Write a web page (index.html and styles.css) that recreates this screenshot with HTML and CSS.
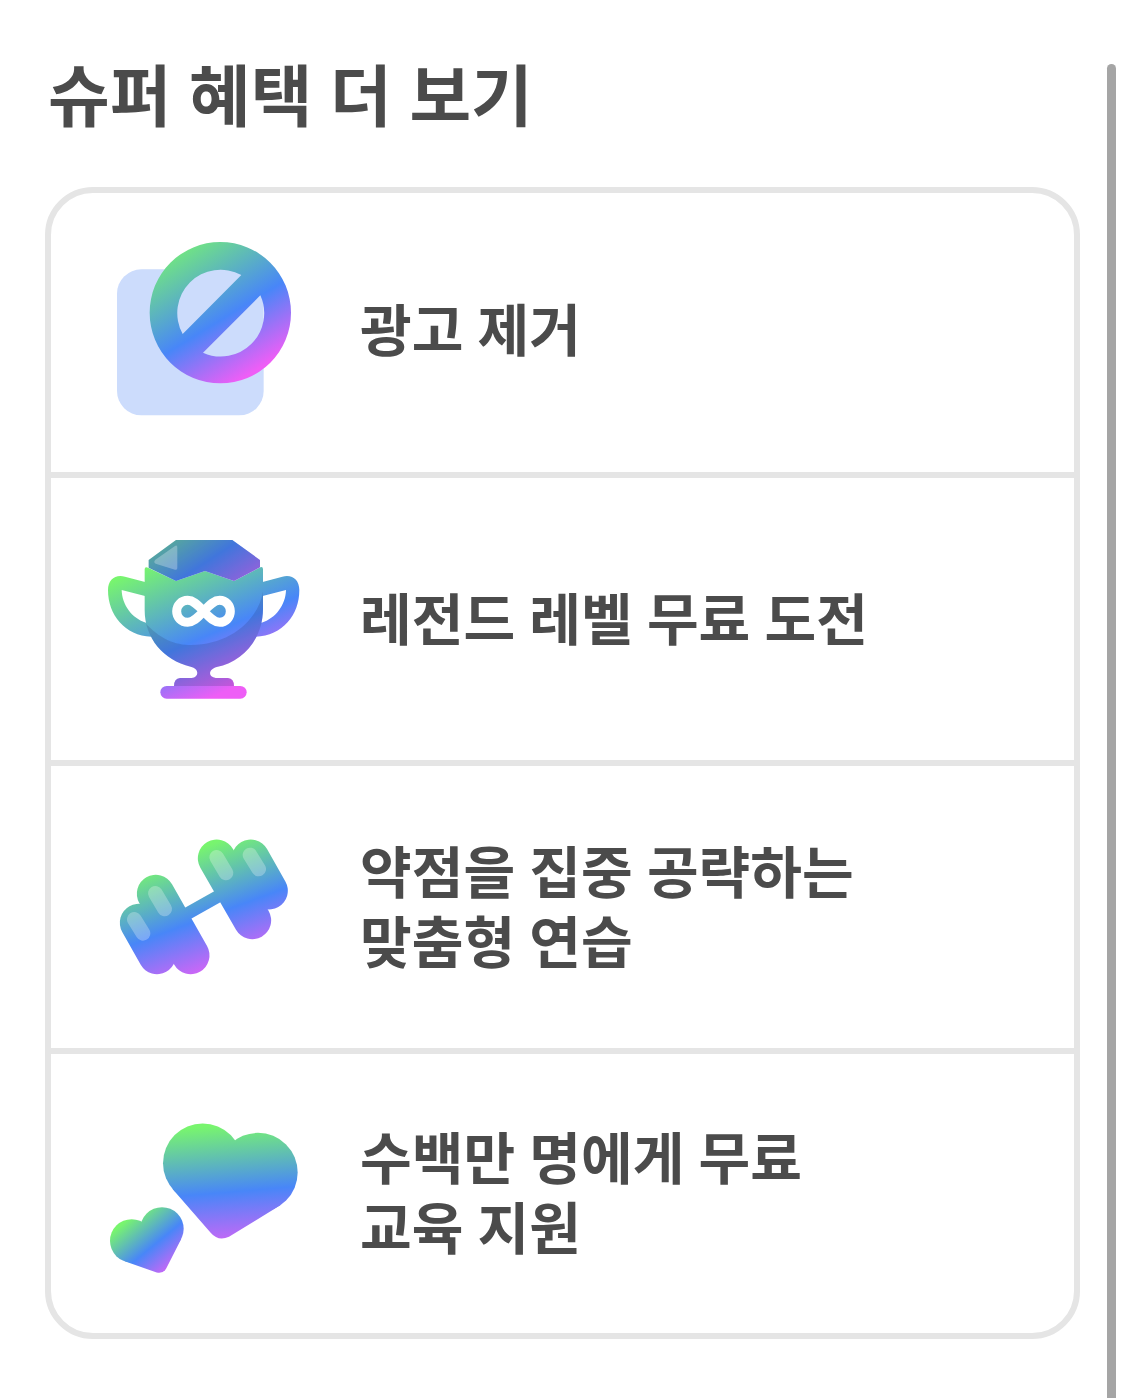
FILE: index.html
```html
<!DOCTYPE html>
<html lang="ko">
<head>
    <meta charset="UTF-8">
    <meta name="viewport" content="width=device-width, initial-scale=1.0">
    <title>슈퍼 혜택 더 보기</title>
    <link rel="stylesheet" href="styles.css">
</head>
<body>
    <h1>슈퍼 혜택 더 보기</h1>
    <ul class="benefits">
        <li class="benefit">
            <svg class="icon" viewBox="0 8 630 630">
                <defs>
                    <linearGradient id="banFill" gradientUnits="userSpaceOnUse" x1="217" y1="42" x2="476" y2="464">
                        <stop offset="0" stop-color="#78f56e"/>
                        <stop offset="0.57" stop-color="#4886f8"/>
                        <stop offset="0.94" stop-color="#ee5ef6"/>
                    </linearGradient>
                </defs>
                <rect x="51" y="132" width="440" height="438" rx="73" fill="#ccdcfc"/>
                <path fill="url(#banFill)" fill-rule="evenodd" d="M361 50A212 212 0 1 1 361 474A212 212 0 1 1 361 50ZM424 149A130 130 0 0 0 248 326ZM481 210L309 382A130 130 0 0 0 481 210Z"/>
            </svg>
            <p>광고 제거</p>
        </li>
        <li class="benefit">
            <svg class="icon" viewBox="0 -33 630 630">
                <defs>
                    <linearGradient id="cupFill" gradientUnits="userSpaceOnUse" x1="170" y1="110" x2="345" y2="513">
                        <stop offset="0" stop-color="#78f56e"/>
                        <stop offset="0.6" stop-color="#4886f8"/>
                        <stop offset="1" stop-color="#ee5ef6"/>
                    </linearGradient>
                    <linearGradient id="gemFill" gradientUnits="userSpaceOnUse" x1="190" y1="-50" x2="408" y2="280">
                        <stop offset="0" stop-color="#78f56e"/>
                        <stop offset="0.52" stop-color="#4886f8"/>
                        <stop offset="1" stop-color="#ee5ef6"/>
                    </linearGradient>
                    <path id="cup" d="M134 133Q134 124 144 128L228 168L315 138L402 168L478 128Q489 123 489 133V252C489 340 430 410 350 426C324 433 324 457 347 459H384Q402 461 402 483H222Q222 461 240 459H275C298 457 298 430 272 425C190 405 134 340 134 255Z"/>
                    <clipPath id="cupClip"><use href="#cup"/></clipPath>
                </defs>
                <g fill="url(#cupFill)">
                    <path fill-rule="evenodd" d="M138 172L75 155C45 147 24 165 24 195C24 270 75 332 154 335L145 290L138 293C96 280 66 240 65 195L138 214Z"/>
                    <path fill-rule="evenodd" d="M485 172L547 155C577 147 598 165 598 195C598 270 548 332 467 335L478 290L485 293C527 280 557 240 558 195L485 214Z"/>
                    <use href="#cup"/>
                    <rect x="181" y="483" width="259" height="38" rx="19"/>
                </g>
                <path fill="url(#gemFill)" d="M228 45H397L480 105V127L402 168L315 138L228 168L146 128V105Z"/>
                <path fill="#212b60" opacity="0.18" d="M228 45H397L480 105V127L402 168L315 138L228 168L146 128V105Z"/>
                <path fill="#212b60" opacity="0.18" clip-path="url(#cupClip)" d="M130 288C180 342 222 360 275 360C385 360 473 290 489 200V483H130Z"/>
                <path fill="#fff" opacity="0.28" d="M166 104L225 63Q232 59 232 68V129Q232 136 225 134L167 116Q159 111 166 104Z"/>
                <path fill="none" stroke="#fff" stroke-width="27" d="M311 259C290 236 278 226 263 226C244 226 230 241 230 259C230 277 244 292 263 292C278 292 290 282 311 259C332 236 344 226 359 226C378 226 391 241 391 259C391 277 378 292 359 292C344 292 332 282 311 259Z"/>
            </svg>
            <p>레전드 레벨 무료 도전</p>
        </li>
        <li class="benefit">
            <svg class="icon" viewBox="0 -69 630 630">
                <defs>
                    <linearGradient id="dumbbellFill" gradientUnits="userSpaceOnUse" x1="270" y1="80" x2="404" y2="444">
                        <stop offset="0" stop-color="#78f56e"/>
                        <stop offset="0.52" stop-color="#4886f8"/>
                        <stop offset="1" stop-color="#ee5ef6"/>
                    </linearGradient>
                </defs>
                <g stroke="url(#dumbbellFill)" stroke-width="113" stroke-linecap="round">
                    <path d="M350 100L457 286"/>
                    <path d="M452 100L507 197"/>
                    <path d="M167 206L272 391"/>
                    <path d="M116 293L171 391"/>
                    <path stroke-width="38" stroke-linecap="butt" d="M240 278L376 202"/>
                </g>
                <g stroke="#fff" stroke-width="44" stroke-linecap="round" opacity="0.27">
                    <path d="M350 97L378 144"/>
                    <path d="M450 90L476 132"/>
                    <path d="M166 205L194 252"/>
                    <path d="M103 283L129 325"/>
                </g>
            </svg>
            <p>약점을 집중 공략하는<br>맞춤형 연습</p>
        </li>
        <li class="benefit">
            <svg class="icon" viewBox="0 -64.5 630 630">
                <defs>
                    <linearGradient id="heartFill" gradientUnits="userSpaceOnUse" x1="348" y1="46" x2="381" y2="440">
                        <stop offset="0" stop-color="#78f56e"/>
                        <stop offset="0.51" stop-color="#4886f8"/>
                        <stop offset="1" stop-color="#ee5ef6"/>
                    </linearGradient>
                    <linearGradient id="smallHeartFill" gradientUnits="userSpaceOnUse" x1="66" y1="341" x2="205" y2="510">
                        <stop offset="0" stop-color="#78f56e"/>
                        <stop offset="0.5" stop-color="#4886f8"/>
                        <stop offset="1" stop-color="#ee5ef6"/>
                    </linearGradient>
                </defs>
                <g fill="url(#heartFill)">
                    <circle cx="308" cy="158" r="119"/>
                    <circle cx="474" cy="186" r="119"/>
                    <path d="M217 235L332 367Q355 394 387 379L541 284L403 110Z"/>
                </g>
                <g fill="url(#smallHeartFill)">
                    <circle cx="95" cy="391" r="65"/>
                    <circle cx="186" cy="355" r="65"/>
                    <path d="M74 452L170 486Q190 491 199 473L244 385L126 345Z"/>
                </g>
            </svg>
            <p>수백만 명에게 무료<br>교육 지원</p>
        </li>
    </ul>
    <div class="scrollbar"></div>
</body>
</html>
```

FILE: styles.css
```css
* {
    box-sizing: border-box;
}
body {
    height: 1398px;
    margin: 0;
    padding: 42px 45px 0;
    background-color: #fff;
    color: #4b4b4b;
    font-family: "Noto Sans CJK KR", sans-serif;
    font-weight: bold;
    overflow: hidden;
}
h1 {
    margin: 0 0 45px;
    padding-left: 3px;
    font-size: 67px;
    line-height: 100px;
    word-spacing: -1px;
}
.benefits {
    margin: 0;
    padding: 0;
    border: 6px solid #e5e5e5;
    border-radius: 48px;
    list-style: none;
}
.benefit {
    display: flex;
    align-items: center;
    gap: 50px;
    height: 288px;
    padding-left: 49px;
    border-bottom: 6px solid #e5e5e5;
}
.benefit:first-child {
    height: 285px;
}
.benefit:last-child {
    height: 279px;
    border-bottom: none;
}
.benefit p {
    margin: 0;
    padding-bottom: 7px;
    font-size: 56.2px;
    line-height: 70px;
    word-spacing: -1.5px;
}
.benefit:first-child p {
    padding-bottom: 12px;
}
.icon {
    flex: none;
    width: 210px;
    height: 210px;
}
/* always over the page, on the right edge */
.scrollbar {
    position: absolute;
    top: 64px;
    right: 9px;
    bottom: 0;
    width: 9px;
    border-radius: 5px 5px 0 0;
    background-color: #a5a5a5;
}
```
